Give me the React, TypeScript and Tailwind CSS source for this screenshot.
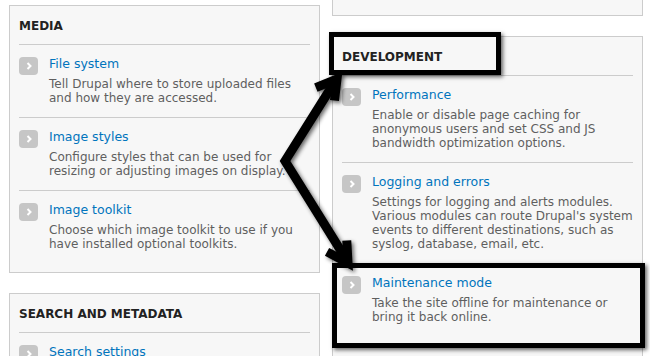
const Chevron = () => (
  <span className="mt-[2px] flex h-[18px] w-[19px] shrink-0 items-center justify-center rounded-[4px] bg-[#c6c6c6]">
    <svg width="8" height="10" viewBox="0 0 8 10">
      <path d="M2.5 2 L5.5 5 L2.5 8" fill="none" stroke="#fff" strokeWidth="2" />
    </svg>
  </span>
)

type Item = { title: string; desc: string }

const Row = ({ item, last }: { item: Item; last?: boolean }) => (
  <div className={`flex pt-[10px] pb-[12px] ${last ? '' : 'border-b border-[#cccccc]'}`}>
    <Chevron />
    <div className="ml-[11px] min-w-0 flex-1">
      <div className="text-[12.5px] leading-[18px] text-[#0074bd]">{item.title}</div>
      <div className="mt-[4px] text-[12px] leading-[14px] text-[#5f5f5f]">{item.desc}</div>
    </div>
  </div>
)

const Panel = ({
  title,
  items,
  className = '',
}: {
  title: string
  items: Item[]
  className?: string
}) => (
  <div className={`border border-[#cccccc] bg-[#f7f7f7] px-[9px] ${className}`}>
    <h3 className="border-b border-[#cccccc] pt-[12px] pb-[10px] text-[12px] font-bold leading-[16px] text-[#222]">
      {title}
    </h3>
    {items.map((it, i) => (
      <Row key={it.title} item={it} last={i === items.length - 1} />
    ))}
  </div>
)

const media: Item[] = [
  { title: 'File system', desc: 'Tell Drupal where to store uploaded files and how they are accessed.' },
  { title: 'Image styles', desc: 'Configure styles that can be used for resizing or adjusting images on display.' },
  { title: 'Image toolkit', desc: 'Choose which image toolkit to use if you have installed optional toolkits.' },
]

const search: Item[] = [{ title: 'Search settings', desc: 'Configure relevance settings for search and other indexing options.' }]

const development: Item[] = [
  {
    title: 'Performance',
    desc: 'Enable or disable page caching for anonymous users and set CSS and JS bandwidth optimization options.',
  },
  {
    title: 'Logging and errors',
    desc: "Settings for logging and alerts modules. Various modules can route Drupal's system events to different destinations, such as syslog, database, email, etc.",
  },
  { title: 'Maintenance mode', desc: 'Take the site offline for maintenance or bring it back online.' },
]

export default function App() {
  return (
    <div
      className="relative h-[356px] w-[650px] overflow-hidden bg-white"
      style={{ fontFamily: '"DejaVu Sans", Verdana, sans-serif' }}
    >
      <div className="flex gap-[12px] pl-[9px]">
        <div className="w-[311px] shrink-0 pt-[5px]">
          <Panel title="MEDIA" items={media} className="pb-[9px]" />
          <Panel title="SEARCH AND METADATA" items={search} className="mt-[20px]" />
        </div>
        <div className="w-[311px] shrink-0">
          <div className="h-[16px] border-x border-b border-[#cccccc] bg-[#f7f7f7]" />
          <Panel title="DEVELOPMENT" items={development} className="mt-[20px] pb-[40px]" />
        </div>
      </div>

      {/* annotation boxes */}
      <div className="absolute left-[329px] top-[32px] h-[43px] w-[172px] border-[5px] border-black shadow-[2px_2px_4px_rgba(0,0,0,0.6)]" />
      <div className="absolute left-[332px] top-[263px] h-[85px] w-[313px] border-[5px] border-black shadow-[2px_2px_4px_rgba(0,0,0,0.6)]" />

      {/* annotation arrows */}
      <svg className="pointer-events-none absolute left-0 top-0" width="650" height="356">
        <defs>
          <filter id="sh" x="-20%" y="-20%" width="140%" height="140%">
            <feGaussianBlur in="SourceAlpha" stdDeviation="2" />
            <feOffset dx="2" dy="2" result="b" />
            <feComponentTransfer>
              <feFuncA type="linear" slope="0.6" />
            </feComponentTransfer>
            <feMerge>
              <feMergeNode />
              <feMergeNode in="SourceGraphic" />
            </feMerge>
          </filter>
        </defs>
        <g filter="url(#sh)" fill="none" stroke="#000" strokeWidth="9" strokeLinejoin="miter">
          <polyline points="334,83 285,161 346,259" />
          <polyline points="320,86 337,79 335,96" strokeLinecap="square" />
          <polyline points="331,254 348,263 347,245" strokeLinecap="square" />
        </g>
      </svg>
    </div>
  )
}
